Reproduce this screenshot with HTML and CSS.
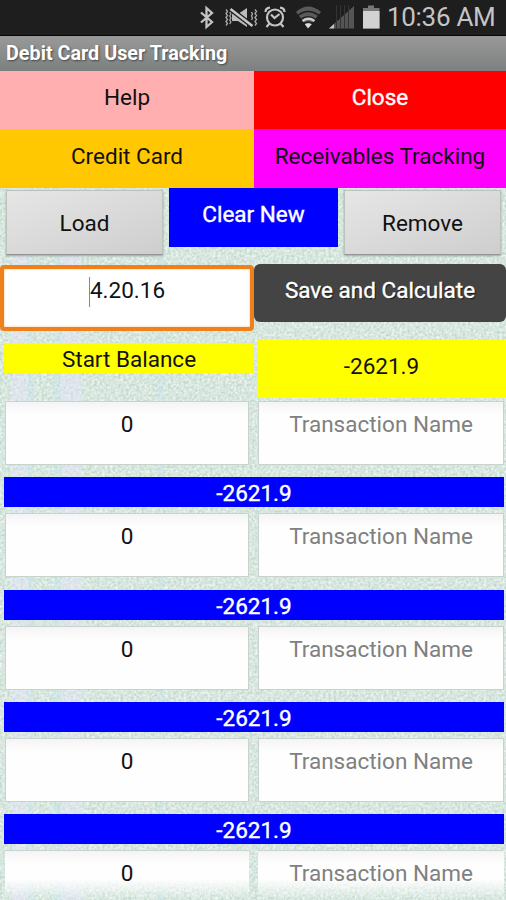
FILE: index.html
```
<!DOCTYPE html>
<html lang="en">
<head>
    <meta charset="UTF-8">
    <meta name="viewport" content="width=device-width, initial-scale=1.0">
    <title>Debit Card User Tracking</title>
    <link rel="stylesheet" href="styles.css">
</head>
<body>
    <div class="screen">
        <svg class="texture" width="506" height="900">
            <filter id="paper" x="0" y="0" width="100%" height="100%" color-interpolation-filters="sRGB">
                <feTurbulence type="fractalNoise" baseFrequency="0.38" numOctaves="2" seed="4"/>
                <feColorMatrix values="0.32 0 0 0 0.685  0.2 0 0 0 0.805  0.26 0 0 0 0.745  0 0 0 0 1"/>
            </filter>
            <rect width="506" height="900" filter="url(#paper)"/>
            <g fill="#e8e4ff" opacity="0.4">
                <rect x="12" y="188" width="16" height="712"/>
                <rect x="61" y="188" width="21" height="712"/>
            </g>
            <g fill="#c4e4f0" opacity="0.35">
                <rect x="28" y="188" width="6" height="712"/>
                <rect x="54" y="188" width="7" height="712"/>
                <rect x="157" y="188" width="7" height="712"/>
            </g>
        </svg>

        <div class="statusBar">
            <svg class="statusIcons" width="192" height="35" viewBox="190 0 192 35">
                <path d="M201 12.500l11 9.500-5.500 5V8l5.500 5-11 9.500" fill="none" stroke="#c4c4c4" stroke-width="2.300"/>
                <path d="M232 14h6l9-6v19l-9-6h-6z" fill="#bcbcbc"/>
                <path d="M230.500 9l22 17" stroke="#1e1e1e" stroke-width="5"/>
                <path d="M230.500 9l22 17" stroke="#c8c8c8" stroke-width="2.500"/>
                <path d="M226 9.500l1.500 2-1.500 2 1.500 2-1.500 2 1.500 2-1.500 2 1.500 2-1.500 2M229.800 12l1 2-1 2 1 2-1 2 1 2-1 2M251.500 12l1 2-1 2 1 2-1 2M255 9.500l1.500 2-1.500 2 1.500 2-1.500 2 1.500 2-1.500 2 1.500 2-1.500 2" fill="none" stroke="#aaa" stroke-width="1.300"/>
                <g fill="none" stroke="#c4c4c4" stroke-width="2.200">
                    <circle cx="275" cy="17.500" r="8"/>
                    <path d="M265.500 12q0-4 4.500-4.300M284.500 12q0-4-4.500-4.300M269.500 23.500l-3 3.500M280.500 23.500l3 3.500M271 14.500l3.500 3.500 5-4"/>
                </g>
                <path d="M308 27.500l-12-15.500q12-11 25 0z" fill="#5a5a5a"/>
                <g fill="none" stroke="#1e1e1e" stroke-width="1.600">
                    <path d="M298 15.500q10-8 21 0M301 19.500q7-5.500 14.500 0M304 23.500q4-3 8.500 0"/>
                </g>
                <path d="M308 28.500l-3.200-4.200q3.400-2.300 7 0z" fill="#ddd"/>
                <path d="M302.500 21q6-4.500 12 0" fill="none" stroke="#ccc" stroke-width="2.200"/>
                <path d="M329 28.500L354 6v22.500z" fill="#555"/>
                <path d="M329 28.500l5-4.500v4.500z" fill="#c4c4c4"/>
                <path d="M336.500 5v24M340.500 5v24M344.500 5v24M348.500 5v24" stroke="#333" stroke-width="1"/>
                <path d="M363 8h5V5.500h6V8h5.500v20.500H363z" fill="#777"/>
                <path d="M363 11h16.500v17.500H363z" fill="#d2d2d2"/>
            </svg>
            <span class="time">10:36 AM</span>
        </div>
        <div class="titleBar">Debit Card User Tracking</div>

        <div class="menu">
            <div class="menuItem help">Help</div>
            <div class="menuItem close">Close</div>
            <div class="menuItem credit">Credit Card</div>
            <div class="menuItem receivables">Receivables Tracking</div>
        </div>

        <div class="actions">
            <div class="greyButton">Load</div>
            <div class="clearButton">Clear New</div>
            <div class="greyButton">Remove</div>
        </div>

        <div class="saveRow">
            <div class="dateInput"><span class="cursor"></span>4.20.16</div>
            <div class="saveButton">Save and Calculate</div>
        </div>

        <div class="balanceRow">
            <div class="startLabel">Start Balance</div>
            <div class="startValue">-2621.9</div>
        </div>

        <div class="transactions">
            <div class="entry">
                <div class="field">0</div>
                <div class="field name">Transaction Name</div>
            </div>
            <div class="total">-2621.9</div>
            <div class="entry">
                <div class="field">0</div>
                <div class="field name">Transaction Name</div>
            </div>
            <div class="total">-2621.9</div>
            <div class="entry">
                <div class="field">0</div>
                <div class="field name">Transaction Name</div>
            </div>
            <div class="total">-2621.9</div>
            <div class="entry">
                <div class="field">0</div>
                <div class="field name">Transaction Name</div>
            </div>
            <div class="total">-2621.9</div>
            <div class="entry last">
                <div class="field">0</div>
                <div class="field name">Transaction Name</div>
            </div>
        </div>
    </div>
</body>
</html>
```
FILE: styles.css
```
* { box-sizing: border-box; }
body {
    margin: 0;
    font-family: Roboto, sans-serif;
}
.screen {
    position: relative;
    width: 506px;
    height: 900px;
    overflow: hidden;
    isolation: isolate;
    font-size: 22.500px;
    color: #111;
    text-align: center;
    white-space: nowrap;
}
.texture {
    position: absolute;
    top: 0;
    left: 0;
    z-index: -1;
}
.statusBar {
    display: flex;
    justify-content: flex-end;
    height: 36px;
    padding-right: 12px;
    background-color: #1e1e1e;
    border-bottom: 1px solid #080808;
}
.time {
    width: 112px;
    font-size: 26px;
    line-height: 35px;
    letter-spacing: -0.3px;
    text-align: left;
    padding-left: 5px;
    color: #c4c4c4;
}
.titleBar {
    height: 35px;
    padding-left: 6px;
    font-size: 19.800px;
    font-weight: bold;
    line-height: 36px;
    text-align: left;
    color: #fff;
    text-shadow: 1px 1px 2px #444;
    background: linear-gradient(#999, #7d8080);
}
.menu {
    display: grid;
    grid-template-columns: 254px 252px;
    grid-template-rows: 58px 59px;
}
.menuItem { line-height: 55px; }
.help { background-color: #ffafaf; line-height: 53px; }
.close { background-color: #ff0000; line-height: 53px; }
.credit { background-color: #ffc800; }
.receivables { background-color: #ff00ff; }
.close, .clearButton, .saveButton, .total {
    color: #fff;
    -webkit-text-stroke: 0.4px #fff;
}
.actions {
    display: flex;
    justify-content: space-between;
    height: 76px;
    padding: 0 5px 0 6px;
}
.greyButton {
    width: 157px;
    height: 65px;
    margin-top: 2px;
    line-height: 64px;
    background: linear-gradient(160deg, #e6e6e6, #cecece);
    border: 1px solid #bcc3bf;
    border-bottom-color: #929795;
    box-shadow: 0 1px 2px #9aa5a0;
}
.clearButton {
    width: 169px;
    height: 59px;
    line-height: 53px;
    background-color: #0000ff;
}
.saveRow {
    display: flex;
    height: 76px;
}
.dateInput {
    width: 254px;
    height: 66px;
    margin-top: 1px;
    line-height: 42px;
    background-color: #fff;
    border: 4px solid #f0801c;
    border-radius: 4px;
    box-shadow: inset 0 0 2px #f7b26c;
}
.cursor {
    display: inline-block;
    width: 1px;
    height: 30px;
    vertical-align: middle;
    background-color: #888;
}
.saveButton {
    width: 252px;
    height: 58px;
    line-height: 53px;
    text-shadow: 1px 1px 1px #111;
    background-color: #444;
    border-radius: 6px;
}
.balanceRow {
    display: flex;
    justify-content: space-between;
    height: 61px;
    padding-left: 4px;
}
.startLabel {
    width: 250px;
    height: 30px;
    margin-top: 3px;
    line-height: 32px;
    background-color: #ffff00;
}
.startValue {
    width: 249px;
    height: 58px;
    line-height: 53px;
    background-color: #ffff00;
}
.entry {
    display: grid;
    grid-template-columns: 244px 246px;
    gap: 9px;
    height: 76.300px;
    padding-left: 5px;
}
.field {
    height: 64px;
    line-height: 45px;
    background: linear-gradient(#f4f4f4, #fefefe 12px);
    border: 1px solid #c9d3ce;
}
.name { color: #808080; }
.total {
    height: 30px;
    margin: 0 2px 6px 4px;
    line-height: 33px;
    background-color: #0000ff;
}
/* the last row fades out at the bottom edge */
.last .field {
    background: linear-gradient(#f4f4f4, #fefefe 12px, #fefefe 28px, transparent 48px);
    border-color: transparent;
    border-top-color: #c9d3ce;
}
```
